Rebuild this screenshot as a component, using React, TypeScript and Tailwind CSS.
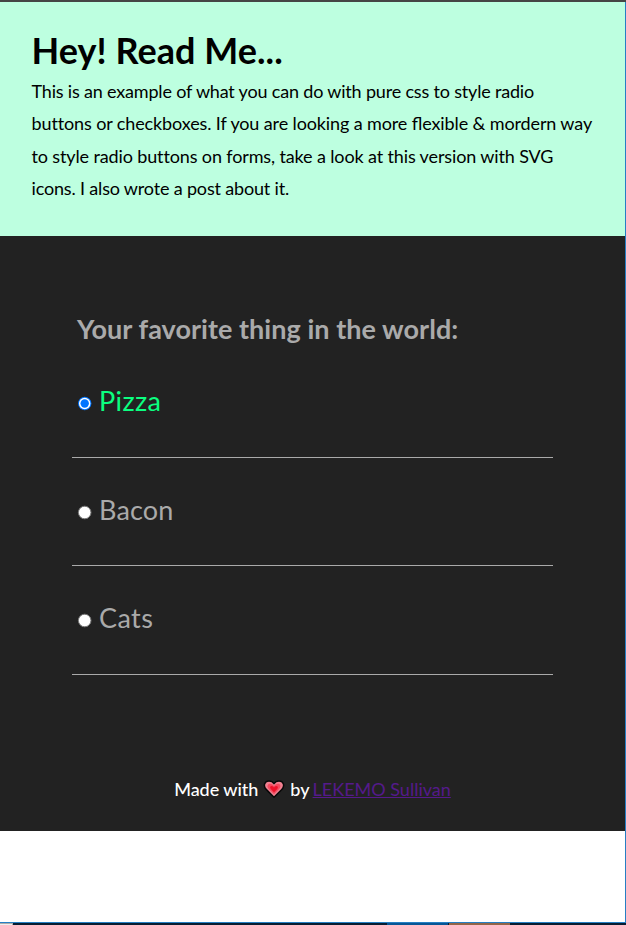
import { useState } from "react";

const options = [
  { name: "Pizza", tracking: "tracking-[0.4px]" },
  { name: "Bacon", tracking: "tracking-[0.15px]" },
  { name: "Cats", tracking: "tracking-[0.4px]" },
];

function Radio({ checked }: { checked: boolean }) {
  return (
    <svg className="mt-[11px] h-[15px] w-[15px] shrink-0" viewBox="0 0 15 15" aria-hidden="true">
      {checked ? (
        <>
          <circle cx="7.7" cy="7.5" r="6.7" fill="#0075ff" />
          <circle cx="7.7" cy="7.5" r="5.7" fill="#ffffff" />
          <circle cx="7.7" cy="7.5" r="4.2" fill="#0075ff" />
        </>
      ) : (
        <circle cx="7.7" cy="7.5" r="6.3" fill="#ffffff" stroke="#767676" strokeWidth="1" />
      )}
    </svg>
  );
}

function Heart() {
  return (
    <svg className="mx-[5px] mt-[6px] h-[20px] w-[22px]" viewBox="0 0 22 20" aria-label="heart">
      <path
        d="M11 18.2 L3.2 10.4 C-0.3 6.8 1.7 1.9 6 1.9 C8.3 1.9 10 3 11 4.7 C12 3 13.7 1.9 16 1.9 C20.3 1.9 22.3 6.8 18.8 10.4 Z"
        fill="#f08091"
        stroke="#080808"
        strokeWidth="1.5"
        strokeLinejoin="round"
      />
      <path d="M11 15.2 L5.8 10 C3.4 7.4 4.6 4.8 7 4.8 C9 4.8 10.3 6 11 7.4 C11.7 6 13 4.8 15 4.8 C17.4 4.8 18.6 7.4 16.2 10 Z" fill="#f4485d" />
      <path d="M11 13.2 L8 10.2 C6.4 8.3 7.2 7 8.5 7 C9.8 7 10.6 7.8 11 8.8 C11.4 7.8 12.2 7 13.5 7 C14.8 7 15.6 8.3 14 10.2 Z" fill="#ee1029" />
    </svg>
  );
}

export default function App() {
  const [selected, setSelected] = useState("Pizza");
  return (
    <div className="flex h-[925px] w-[626px] flex-col overflow-hidden bg-white font-[Lato,sans-serif] text-[18px] leading-[32.4px] text-black">
      <div className="h-[2px] shrink-0 bg-[#454545]" />
      <div className="flex h-[920px] shrink-0 flex-col border-r border-[#267fc4]">
        <header className="h-[234px] shrink-0 bg-[#bdffe0] pt-[25px] pl-[31.5px]">
          <h1 className="pb-[2px] text-[36px] leading-[46px] font-bold tracking-[0.04px]">Hey! Read Me...</h1>
          <p className="whitespace-nowrap">
            <span className="tracking-[-0.18px]">This is an example of what you can do with pure css to style radio</span>
            <br />
            <span className="tracking-[-0.12px]">
              buttons or checkboxes. If you are looking a more{" "}
              <span className="[font-feature-settings:'liga']">flexible</span> &amp; mordern way
            </span>
            <br />
            <span className="tracking-[-0.13px]">to style radio buttons on forms, take a look at this version with SVG</span>
            <br />
            <span className="tracking-[-0.17px]">icons. I also wrote a post about it.</span>
          </p>
        </header>
        <main className="flex h-[595px] shrink-0 flex-col bg-[#222222] pt-[77px] text-[#aaaaaa]">
          <h2 className="ml-[77px] text-[27px] leading-[32px] font-bold tracking-[0.04px]">Your favorite thing in the world:</h2>
          <div className="mt-[4.6px] ml-[72px] w-[481px]" role="radiogroup">
            {options.map(({ name, tracking }) => (
              <div key={name} className="h-[108.35px] border-b border-[#aaaaaa] pl-[5px]">
                <button
                  role="radio"
                  aria-checked={selected === name}
                  onClick={() => setSelected(name)}
                  className={
                    selected === name
                      ? "flex items-start gap-[7px] pt-[35.8px] text-[27px] leading-[32px] text-[#0bff80]"
                      : "flex items-start gap-[7px] pt-[35.8px] text-[27px] leading-[32px]"
                  }
                >
                  <Radio checked={selected === name} />
                  <span className={tracking}>{name}</span>
                </button>
              </div>
            ))}
          </div>
          <footer className="mt-[98.2px] flex justify-center leading-[32px] text-white">
            <span className="font-medium tracking-[-0.04px]">Made with</span>
            <Heart />
            <span className="font-medium">by</span>
            <a className="ml-[3px] text-[#551a8b] underline" href="#">LEKEMO Sullivan</a>
          </footer>
        </main>
      </div>
      <div className="h-[1px] shrink-0 bg-[#267fc4]" />
      <div className="flex h-[2px] shrink-0 bg-[#071d32]">
        <div className="w-[13px] border-t border-r border-[#aaaaaa] bg-[#eeeeee]" />
        <div className="w-[374px]" />
        <div className="w-[61px] bg-[#075695]" />
        <div className="ml-[1px] w-[61px] bg-[#926548]" />
      </div>
    </div>
  );
}
